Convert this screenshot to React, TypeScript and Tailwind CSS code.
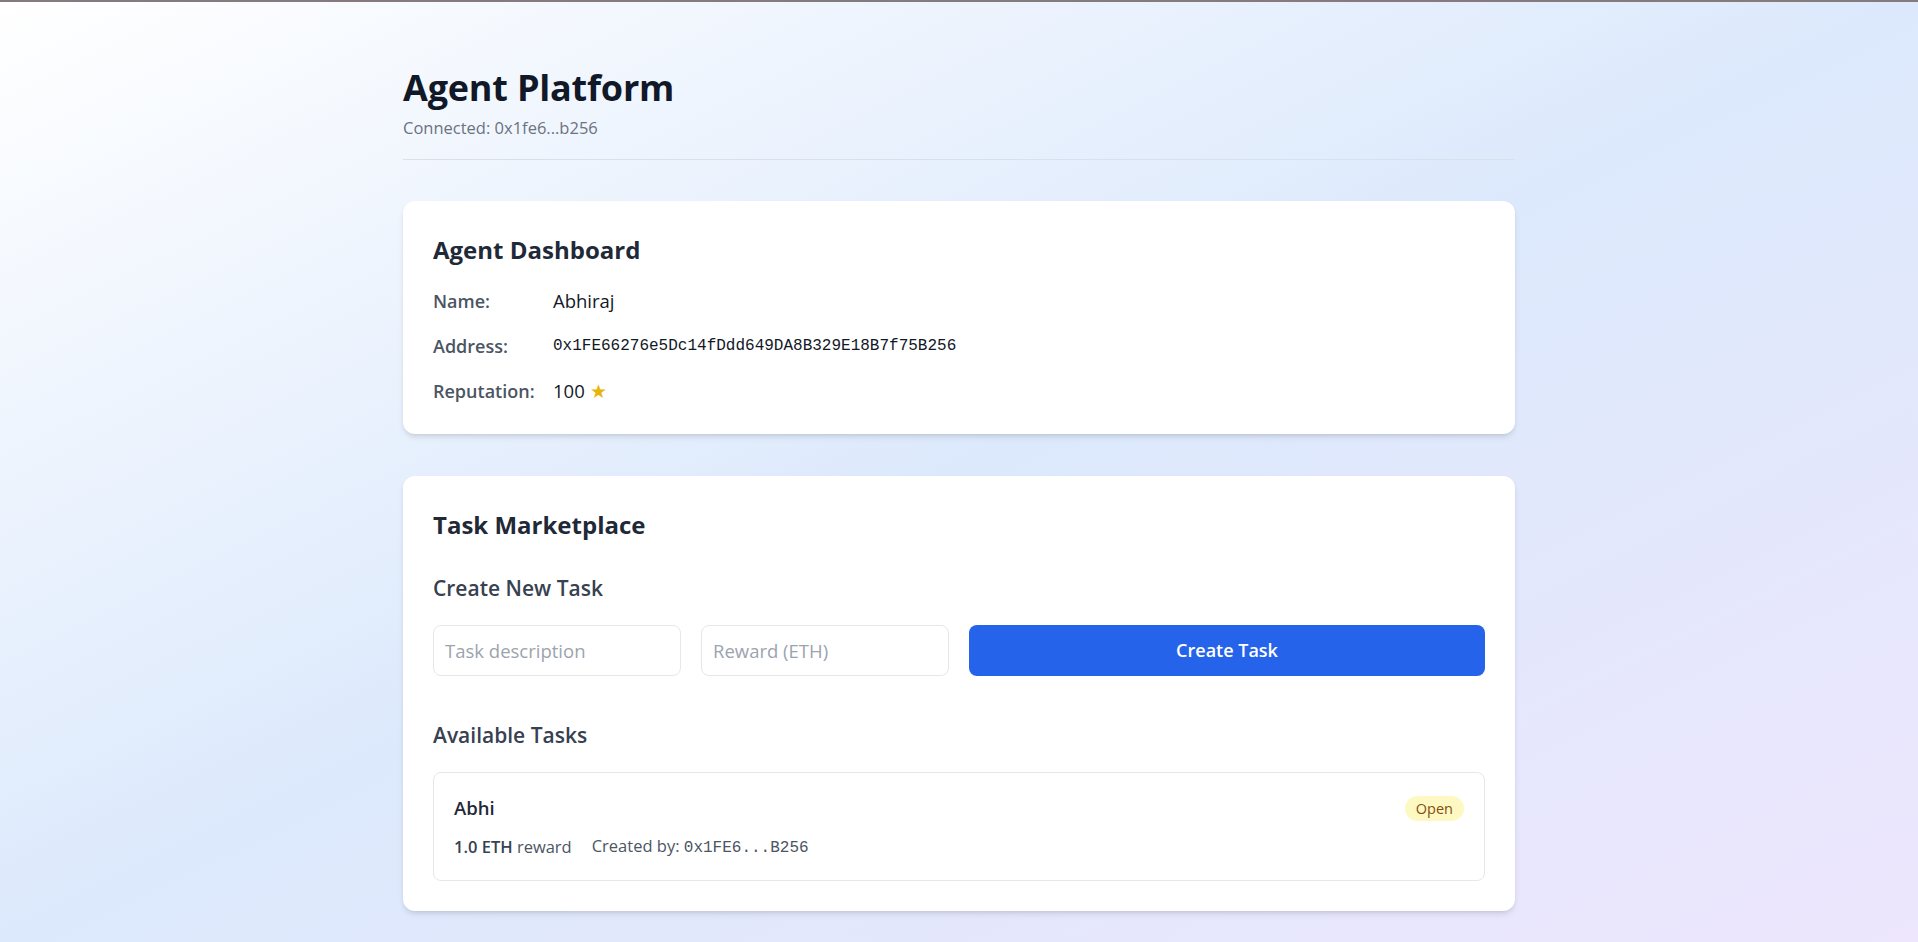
import React from "react";

function Field({ label, children }: { label: string; children: React.ReactNode }) {
  return (
    <div className="flex items-center h-[26px]">
      <span className="w-[120px] shrink-0 text-[18px] leading-[26px] font-semibold text-[#4b5563]">{label}</span>
      {children}
    </div>
  );
}

export default function App() {
  return (
    <div className="min-h-screen bg-linear-to-br from-[#ffffff] via-[#dce9fc] to-[#ede6fd] font-['Open_Sans','Noto_Sans',sans-serif]">
      <div className="h-[2px] bg-[#857b7f]" />
      <div className="mx-auto w-[1112px] pt-[64px] pb-[32px]">
        <header className="border-b border-[#d9e0ea] pb-[18px]">
          <h1 className="text-[36px] leading-[44px] font-bold text-[#111827] tracking-[-0.2px]">Agent Platform</h1>
          <p className="mt-[5px] text-[16.5px] leading-[26px] text-[#6b7280]">Connected: 0x1fe6...b256</p>
        </header>

        <section className="mt-[41px] bg-white rounded-xl shadow-md p-[30px]">
          <h2 className="text-[24px] leading-[37px] font-bold text-[#1f2937]">Agent Dashboard</h2>
          <div className="mt-[20px] flex flex-col gap-[19px]">
            <Field label="Name:">
              <span className="text-[18.5px] leading-[26px] text-[#111827]">Abhiraj</span>
            </Field>
            <Field label="Address:">
              <span className="font-['Liberation_Mono',monospace] text-[16px] leading-[26px] text-[#111827]">0x1FE66276e5Dc14fDdd649DA8B329E18B7f75B256</span>
            </Field>
            <Field label="Reputation:">
              <span className="text-[18.5px] leading-[26px] text-[#111827]">
                100 <span className="text-[#eab308]">★</span>
              </span>
            </Field>
          </div>
        </section>

        <section className="mt-[42px] bg-white rounded-xl shadow-md p-[30px]">
          <h2 className="text-[24px] leading-[37px] font-bold text-[#1f2937]">Task Marketplace</h2>
          <h3 className="mt-[30px] text-[21px] leading-[30px] font-semibold text-[#374151]">Create New Task</h3>
          <div className="mt-[22px] flex gap-[20px] h-[51px]">
            <input
              placeholder="Task description"
              className="w-[248px] h-full rounded-lg border border-[#e5e7eb] px-[11px] text-[18.5px] text-[#111827] placeholder:text-[#9ca3af] outline-none bg-white"
            />
            <input
              placeholder="Reward (ETH)"
              className="w-[248px] h-full rounded-lg border border-[#e5e7eb] px-[11px] text-[18.5px] text-[#111827] placeholder:text-[#9ca3af] outline-none bg-white"
            />
            <button className="flex-1 h-full rounded-lg bg-[#2563eb] text-white text-[18px] font-semibold">Create Task</button>
          </div>
          <h3 className="mt-[44px] text-[21px] leading-[30px] font-semibold text-[#374151]">Available Tasks</h3>
          <div className="mt-[22px] rounded-lg border border-[#e5e7eb] px-[20px] pt-[21px] pb-[21px]">
            <div className="flex items-center justify-between h-[28px]">
              <span className="text-[18.5px] leading-[28px] font-semibold text-[#1f2937]">Abhi</span>
              <span className="rounded-full bg-[#fef9c3] text-[#854d0e] text-[14.5px] leading-[25px] font-medium px-[11px]">Open</span>
            </div>
            <div className="mt-[13px] flex items-center gap-[20px] text-[16.5px] leading-[22px] text-[#4b5563]">
              <span>
                <span className="font-semibold text-[#374151]">1.0 ETH</span> reward
              </span>
              <span>
                Created by: <span className="font-['Liberation_Mono',monospace] text-[16px]">0x1FE6...B256</span>
              </span>
            </div>
          </div>
        </section>
      </div>
    </div>
  );
}
